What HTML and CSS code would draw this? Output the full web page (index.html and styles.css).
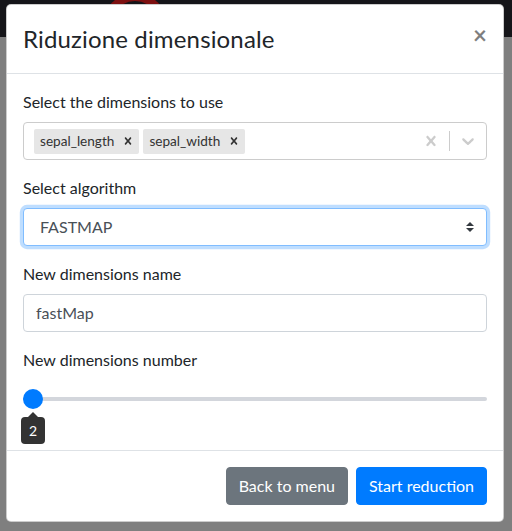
FILE: index.html
```html
<!DOCTYPE html>
<html lang="it">
<head>
<meta charset="utf-8">
<title>Riduzione dimensionale</title>
<link rel="stylesheet" href="styles.css">
</head>
<body>
<header class="topbar">
  <div class="brand-strip">
    <svg class="logo" width="64" height="64" viewBox="0 0 64 64" aria-hidden="true"><circle cx="32" cy="32" r="28" fill="none" stroke="#7d1111" stroke-width="8"/></svg>
    <span class="brand">HDViz</span>
  </div>
</header>

<div class="modal" role="dialog">
  <div class="modal-header">
    <h4 class="modal-title">Riduzione dimensionale</h4>
    <button class="close" type="button">×</button>
  </div>
  <div class="modal-body">
    <div class="form-group">
      <label class="label">Select the dimensions to use</label>
      <div class="rs-control">
        <div class="rs-values">
          <div class="chip"><span class="chip-label">sepal_length</span><span class="chip-remove"><svg viewBox="0 0 20 20" width="14" height="14"><path d="M14.348 14.849c-0.469 0.469-1.229 0.469-1.697 0l-2.651-3.030-2.651 3.029c-0.469 0.469-1.229 0.469-1.697 0-0.469-0.469-0.469-1.229 0-1.697l2.758-3.15-2.759-3.152c-0.469-0.469-0.469-1.228 0-1.697s1.228-0.469 1.697 0l2.652 3.031 2.651-3.031c0.469-0.469 1.228-0.469 1.697 0s0.469 1.229 0 1.697l-2.758 3.152 2.758 3.15c0.469 0.469 0.469 1.229 0 1.698z"/></svg></span></div>
          <div class="chip"><span class="chip-label">sepal_width</span><span class="chip-remove"><svg viewBox="0 0 20 20" width="14" height="14"><path d="M14.348 14.849c-0.469 0.469-1.229 0.469-1.697 0l-2.651-3.030-2.651 3.029c-0.469 0.469-1.229 0.469-1.697 0-0.469-0.469-0.469-1.229 0-1.697l2.758-3.15-2.759-3.152c-0.469-0.469-0.469-1.228 0-1.697s1.228-0.469 1.697 0l2.652 3.031 2.651-3.031c0.469-0.469 1.228-0.469 1.697 0s0.469 1.229 0 1.697l-2.758 3.152 2.758 3.15c0.469 0.469 0.469 1.229 0 1.698z"/></svg></span></div>
        </div>
        <div class="rs-indicators">
          <span class="rs-ind"><svg viewBox="0 0 20 20" width="20" height="20"><path d="M14.348 14.849c-0.469 0.469-1.229 0.469-1.697 0l-2.651-3.030-2.651 3.029c-0.469 0.469-1.229 0.469-1.697 0-0.469-0.469-0.469-1.229 0-1.697l2.758-3.15-2.759-3.152c-0.469-0.469-0.469-1.228 0-1.697s1.228-0.469 1.697 0l2.652 3.031 2.651-3.031c0.469-0.469 1.228-0.469 1.697 0s0.469 1.229 0 1.697l-2.758 3.152 2.758 3.15c0.469 0.469 0.469 1.229 0 1.698z"/></svg></span>
          <span class="rs-sep"></span>
          <span class="rs-ind"><svg viewBox="0 0 20 20" width="20" height="20"><path d="M4.516 7.548c0.436-0.446 1.043-0.481 1.576 0l3.908 3.747 3.908-3.747c0.533-0.481 1.141-0.446 1.574 0 0.436 0.445 0.408 1.197 0 1.615-0.406 0.418-4.695 4.502-4.695 4.502-0.217 0.223-0.502 0.335-0.787 0.335s-0.57-0.112-0.789-0.335c0 0-4.287-4.084-4.695-4.502s-0.436-1.17 0-1.615z"/></svg></span>
        </div>
      </div>
    </div>

    <div class="form-group">
      <label class="label">Select algorithm</label>
      <div class="form-control select">
        <span>FASTMAP</span>
        <svg width="8" height="10" viewBox="0 0 4 5"><path fill="#343a40" d="M2 0L0 2h4zm0 5L0 3h4z"/></svg>
      </div>
    </div>

    <div class="form-group">
      <label class="label">New dimensions name</label>
      <div class="form-control">fastMap</div>
    </div>

    <div class="form-group">
      <label class="label">New dimensions number</label>
      <div class="range">
        <div class="range-track"></div>
        <div class="range-thumb"></div>
        <div class="range-tooltip">2</div>
      </div>
    </div>
  </div>
  <div class="modal-footer">
    <button class="btn btn-secondary" type="button">Back to menu</button>
    <button class="btn btn-primary" type="button">Start reduction</button>
  </div>
</div>
</body>
</html>
```

FILE: styles.css
```css
html, body {
  margin: 0;
  width: 512px;
  height: 531px;
  overflow: hidden;
}

body {
  background: #7f7f7f;
  font-family: Lato, "Open Sans", sans-serif;
  font-size: 16px;
  line-height: 1.5;
  color: #212529;
}

.topbar {
  height: 37px;
  background: #151519;
}

.brand-strip {
  height: 4px;
  overflow: hidden;
  display: flex;
  align-items: flex-start;
  padding-left: 103px;
}

.logo {
  margin-top: -7px;
  flex: none;
}

.brand {
  margin-left: 10px;
  margin-top: -4px;
  font-size: 56px;
  line-height: 1;
  color: #7a7a7a;
}

.modal {
  position: absolute;
  top: 4px;
  left: 6px;
  width: 498px;
  box-sizing: border-box;
  background: #fff;
  border: 1px solid rgba(0, 0, 0, 0.2);
  border-radius: 5px;
}

.modal-header {
  display: flex;
  align-items: flex-start;
  padding: 16px;
  border-bottom: 1px solid #dee2e6;
}

.modal-title {
  margin: 0;
  font-size: 24px;
  font-weight: 400;
  line-height: 36px;
  letter-spacing: 0.15px;
}

.close {
  margin: -16px -16px -16px auto;
  padding: 18px 16px 16px;
  background: none;
  border: 0;
  font-family: Lato, sans-serif;
  font-size: 24px;
  font-weight: 700;
  line-height: 1;
  color: #000;
  opacity: 0.5;
}

.modal-body {
  padding: 16px;
}

.form-group {
  margin-bottom: 16px;
}

.label {
  display: inline-block;
  margin-bottom: 8px;
}

.rs-control {
  display: flex;
  align-items: center;
  box-sizing: border-box;
  min-height: 38px;
  border: 1px solid #ccc;
  border-radius: 4px;
  background: #fff;
}

.rs-values {
  flex: 1;
  display: flex;
  flex-wrap: wrap;
  align-items: center;
  padding: 2px 8px;
}

.chip {
  display: flex;
  margin: 2px;
  background: #e6e6e6;
  border-radius: 2px;
}

.chip-label {
  font-size: 13.6px;
  line-height: 19px;
  padding: 3px 3px 3px 6px;
  color: #333;
}

.chip-remove {
  display: flex;
  align-items: center;
  padding: 0 4px;
  fill: #333;
}

.rs-indicators {
  display: flex;
  align-self: stretch;
  align-items: center;
}

.rs-ind {
  display: flex;
  padding: 8px;
  fill: #ccc;
}

.rs-sep {
  width: 1px;
  align-self: stretch;
  margin: 8px 0;
  background: #ccc;
}

.form-control {
  box-sizing: border-box;
  width: 100%;
  height: 38px;
  padding: 6px 12px;
  font-size: 16px;
  line-height: 24px;
  color: #495057;
  background: #fff;
  border: 1px solid #ced4da;
  border-radius: 4px;
}

.select {
  display: flex;
  align-items: center;
  justify-content: space-between;
  padding-left: 16px;
  border-color: #80bdff;
  box-shadow: 0 0 0 3.2px rgba(0, 123, 255, 0.25);
}

.range {
  position: relative;
  height: 38px;
  display: flex;
  align-items: center;
}

.range-track {
  flex: 1;
  height: 4px;
  background: #d3d6dc;
  border-radius: 2px;
}

.range-thumb {
  position: absolute;
  left: 0;
  top: 9px;
  width: 20px;
  height: 20px;
  border-radius: 50%;
  background: #007bff;
}

.range-tooltip {
  position: absolute;
  left: -2px;
  top: 37px;
  width: 24px;
  height: 27px;
  display: flex;
  align-items: center;
  justify-content: center;
  background: #333;
  color: #fff;
  font-size: 14px;
  border-radius: 4px;
}

.range-tooltip::before {
  content: "";
  position: absolute;
  top: -5px;
  left: 7px;
  border-left: 5px solid transparent;
  border-right: 5px solid transparent;
  border-bottom: 5px solid #333;
}

.modal-footer {
  display: flex;
  justify-content: flex-end;
  gap: 8px;
  padding: 16px;
  border-top: 1px solid #dee2e6;
}

.btn {
  padding: 6px 12px;
  font-family: inherit;
  font-size: 16px;
  line-height: 24px;
  color: #fff;
  border: 1px solid transparent;
  border-radius: 4px;
}

.btn-secondary {
  background: #6c757d;
  border-color: #6c757d;
}

.btn-primary {
  background: #007bff;
  border-color: #007bff;
}
```
